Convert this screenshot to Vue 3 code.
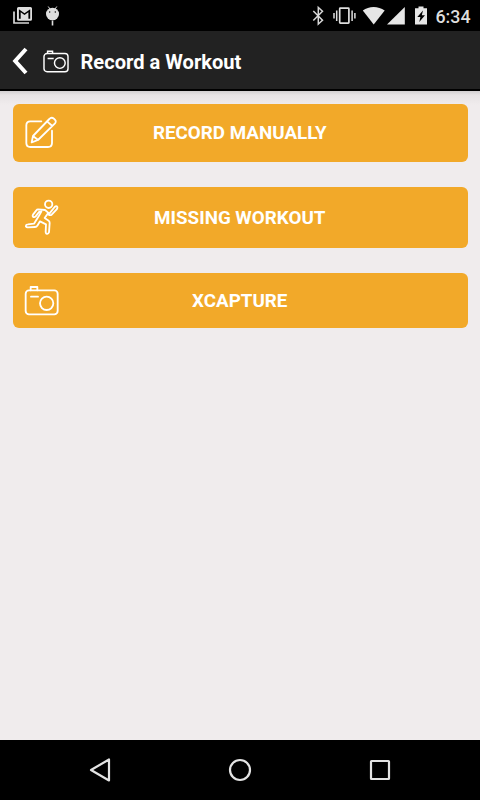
<template>
	<div class="screen">
		<div class="status">
			<svg class="status__left" viewBox="0 0 70 31">
				<path d="M14 11.500V23H29" fill="none" stroke="#d8d8d8" stroke-width="1.700" />
				<path fill="#dedede" fill-rule="evenodd" d="M18.500 7H30.500Q32 7 32 8.500V19.300Q32 20.800 30.500 20.800H18.500Q17 20.800 17 19.300V8.500Q17 7 18.500 7ZM18.900 9.300V18.700H20.700V12.200L24.500 15L28.400 12.200V18.700H30.200V9.300L24.500 13.300Z" />
				<path d="M48.200 6.500L50 9M56.800 6.500L55 9" stroke="#dedede" stroke-width="1" />
				<ellipse cx="52.500" cy="14" rx="6.500" ry="6.300" fill="#dedede" />
				<path d="M52.500 20.500V25.500" stroke="#dedede" stroke-width="1.600" />
				<circle cx="49.700" cy="12" r="0.700" />
				<circle cx="55.300" cy="12" r="0.700" />
			</svg>
			<svg class="status__right" viewBox="306 0 126 31">
				<path d="M313.300 11L322.500 20.200L318.300 24V7.500L322.500 11.300L313.300 20.500" fill="none" stroke="#d6d6d6" stroke-width="1.500" />
				<rect x="339.700" y="8.200" width="9.200" height="15" rx="0.600" fill="none" stroke="#dedede" stroke-width="1.700" />
				<path d="M336.700 10.500V21M352.100 10.500V21M334 13V18.500M354.900 13V18.500" stroke="#dedede" stroke-width="1.500" />
				<path d="M362.800 10.500Q367.500 7 373.600 7T384.700 10.500L373.700 24.600Z" fill="#e6e6e6" />
				<path d="M404.800 7V24.600H387Z" fill="#e6e6e6" />
				<path d="M418.500 6.500H423.500V8.300H427V24.600H415V8.300H418.500Z" fill="#e6e6e6" />
				<path d="M423 10.500L417.300 17H420.400L419.300 22L425 15.300H421.800Z" />
			</svg>
			<span class="status__time">6:34</span>
		</div>
		<div class="header">
			<svg class="header__back" viewBox="0 0 16 28">
				<path d="M14 2L3.200 14L14 26" fill="none" stroke="#fff" stroke-width="4" />
			</svg>
			<svg class="header__camera" viewBox="0 0 34 30" fill="none" stroke="#fff" stroke-width="1.900">
				<rect x="1.300" y="4.600" width="31.400" height="23.800" rx="4" />
				<path d="M6 4.500V1.500H12.500V4.500M6 11H14" />
				<circle cx="22" cy="17" r="7" />
			</svg>
			<h1 class="header__title">Record a Workout</h1>
		</div>
		<div class="content">
			<button v-for="item in items" :key="item.icon" type="button" :class="['btn', 'btn--' + item.icon]">
				<svg v-if="item.icon === 'edit'" class="btn__icon" viewBox="72 60 108 108">
					<path d="M124 79H91Q79 79 79 91V144Q79 156 91 156H144Q156 156 156 144V107" />
					<path d="M95 142L99 123L148 72Q154 65 162 71Q171 78 165 85L114 135ZM99 123L114 135M141 79L157 93" />
				</svg>
				<svg v-else-if="item.icon === 'run'" class="btn__icon" viewBox="72 57 108 108">
					<circle cx="146" cy="73" r="11" />
					<path d="M114 88L135 90L148 101L164 81Q169 76 172 81Q173 84 170 88L155 104Q151 107 146 104L143 101L134 114L146 122Q149 124 149 129L147 157Q145 163 139 161Q137 159 137 156L138 133L120 124L112 137Q110 141 105 141L83 142Q76 141 78 136Q79 133 84 133L102 131L116 109L124 95L117 96L107 109Q103 113 99 110Q97 107 99 104L109 91Q111 88 114 88Z" />
				</svg>
				<svg v-else class="btn__icon" viewBox="72 69 108 108">
					<rect x="77" y="91" width="96" height="72" rx="10" />
					<path d="M92 91V81H112V91M93 110H114" />
					<circle cx="140" cy="130" r="20" />
				</svg>
				<span>{{ item.label }}</span>
			</button>
		</div>
		<div class="nav">
			<svg viewBox="0 0 30 30">
				<path d="M24 4.500V25.500L6 15Z" />
			</svg>
			<svg viewBox="0 0 30 30"><circle cx="15" cy="15" r="10" /></svg>
			<svg viewBox="0 0 30 30"><rect x="6" y="6" width="18" height="18" rx="0.500" /></svg>
		</div>
	</div>
</template>
<script setup>
const items = [
	{ icon: 'edit', label: 'RECORD MANUALLY' },
	{ icon: 'run', label: 'MISSING WORKOUT' },
	{ icon: 'capture', label: 'XCAPTURE' }
]
</script>
<style>
body {
	margin: 0;
}
</style>
<style scoped>
.screen {
	display: flex;
	flex-direction: column;
	height: 100vh;
	overflow: hidden;
	background: #f0eced;
	font-family: Roboto, sans-serif;
}

.status {
	display: flex;
	flex: none;
	height: 31px;
	background: #000;
}
.status__left {
	width: 70px;
	height: 31px;
}
.status__right {
	width: 126px;
	height: 31px;
	margin-left: auto;
}
.status__time {
	width: 44.5px;
	margin-left: 3.5px;
	color: #dedede;
	font-size: 17.8px;
	font-weight: 500;
	line-height: 34px;
}

.header {
	display: flex;
	flex: none;
	align-items: center;
	box-sizing: border-box;
	height: 60px;
	padding-left: 12px;
	border-bottom: 2px solid #000;
	background: #222;
}
.header__back {
	width: 16px;
	height: 28px;
	margin-top: 2px;
}
.header__camera {
	width: 26px;
	height: 23px;
	margin: 3px 0 0 14.5px;
}
.header__title {
	margin: 3px 0 0 12px;
	color: #fff;
	font-size: 20.1px;
	font-weight: 700;
	line-height: 24px;
}

.content {
	display: flex;
	flex: 1;
	flex-direction: column;
	gap: 25px;
	padding: 13px 12.5px;
	background: linear-gradient(#d2cfd0 0, #e7e3e4 4px, #f0eced 14px);
}

.btn {
	display: grid;
	grid-template-columns: 36px 1fr 36px;
	align-items: center;
	height: 58px;
	padding: 0 12px 0 11.5px;
	border: 0;
	border-radius: 6px;
	background: #f2a929;
	color: #fff;
	font: 700 18.8px/22px Roboto, sans-serif;
	text-align: center;
}
.btn--run {
	height: 61px;
}
.btn--capture {
	height: 55px;
}
.btn__icon {
	width: 36px;
	height: 36px;
	fill: none;
	stroke: #fff;
	stroke-width: 5.5;
	stroke-linecap: round;
	stroke-linejoin: round;
}
.btn--edit .btn__icon,
.btn--run .btn__icon {
	margin-top: -1px;
}

.nav {
	display: flex;
	flex: none;
	align-items: center;
	justify-content: space-between;
	height: 60px;
	padding: 0 85px;
	background: #000;
}
.nav svg {
	width: 30px;
	height: 30px;
	fill: none;
	stroke: #e3e3e3;
	stroke-width: 2.200;
	stroke-linejoin: round;
}
</style>
